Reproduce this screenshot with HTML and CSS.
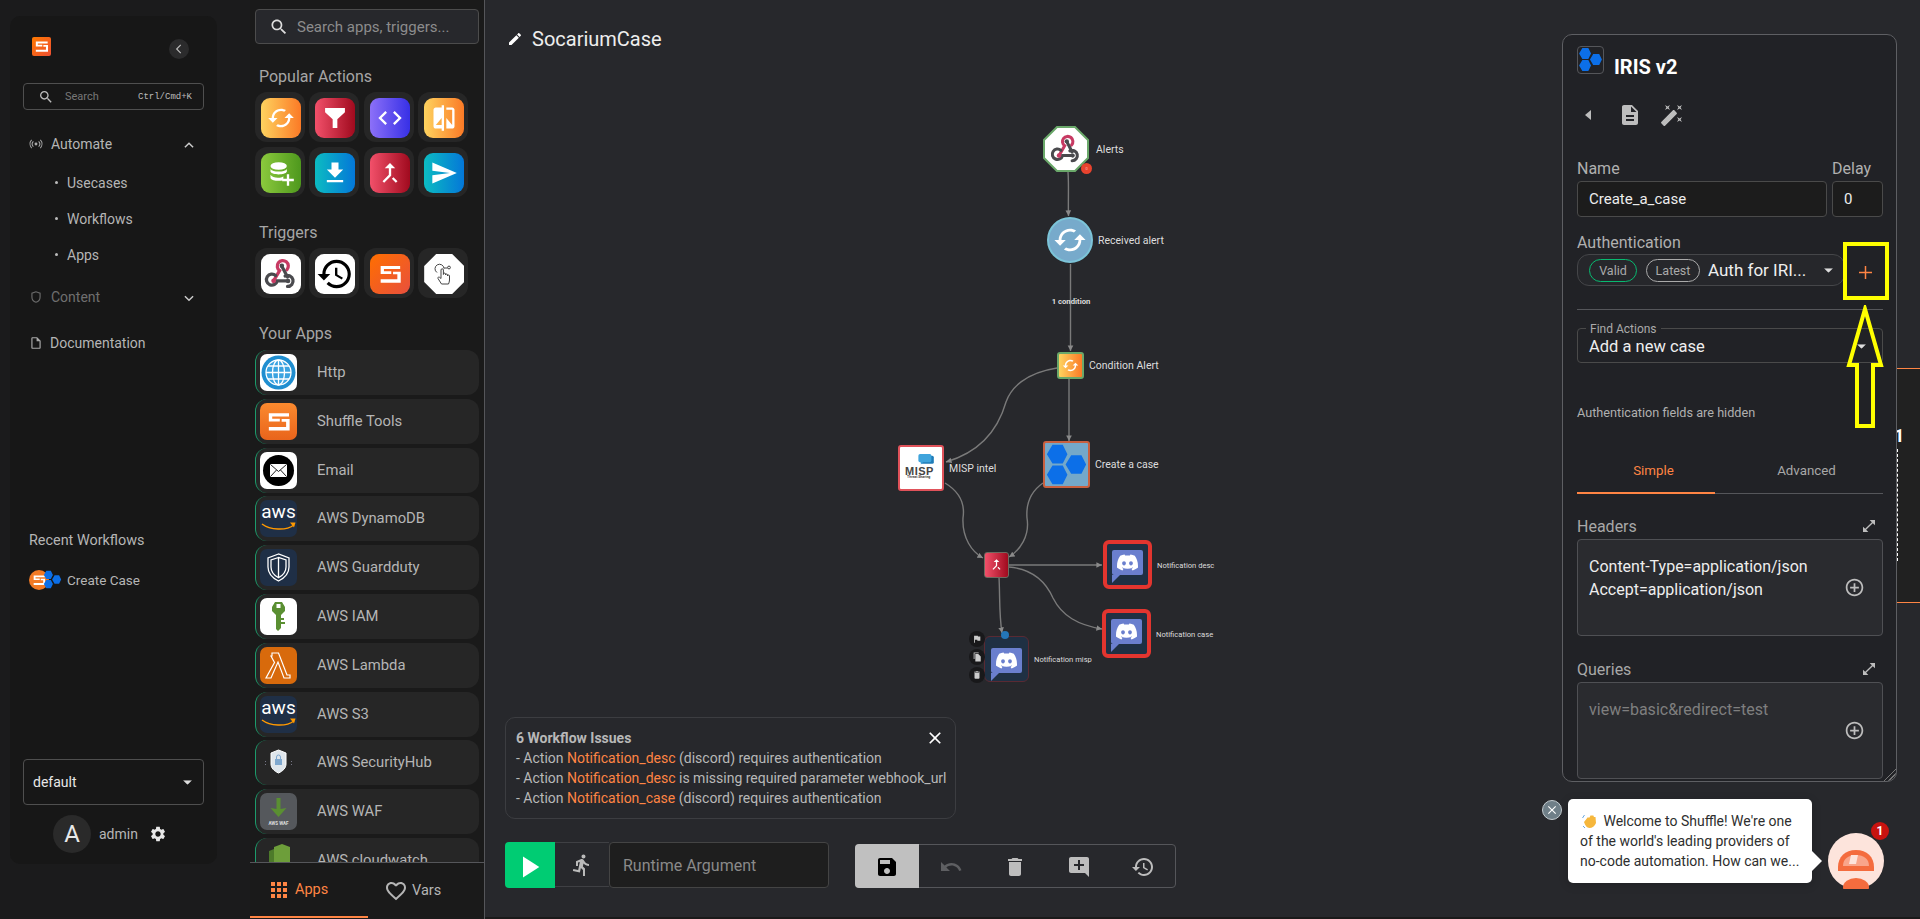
FILE: index.html
```html
<!DOCTYPE html>
<html lang="en">
<head>
    <meta charset="UTF-8" />
    <title>SocariumCase</title>
    <link rel="stylesheet" href="styles.css">
</head>
<body>
    <svg class="defs" width="0" height="0">
        <defs>
            <symbol id="i-search" viewBox="0 0 24 24"><path d="M15.5 14h-.79l-.28-.27C15.41 12.59 16 11.11 16 9.5 16 5.91 13.09 3 9.5 3S3 5.91 3 9.5 5.91 16 9.5 16c1.61 0 3.09-.59 4.23-1.57l.27.28v.79l5 4.99L20.49 19l-4.99-5zm-6 0C7.01 14 5 11.99 5 9.5S7.01 5 9.5 5 14 7.01 14 9.5 11.99 14 9.5 14z"/></symbol>
            <symbol id="i-cached" viewBox="0 0 24 24"><path d="M19 8l-4 4h3c0 3.31-2.69 6-6 6-1.01 0-1.97-.25-2.8-.7l-1.46 1.46C8.97 19.54 10.43 20 12 20c4.42 0 8-3.58 8-8h3l-4-4zM6 12c0-3.31 2.69-6 6-6 1.01 0 1.97.25 2.8.7l1.46-1.46C15.03 4.46 13.57 4 12 4c-4.42 0-8 3.58-8 8H1l4 4 4-4H6z"/></symbol>
            <symbol id="i-merge" viewBox="0 0 24 24"><path d="M17 20.41L18.41 19 15 15.59 13.59 17 17 20.41zM7.5 8H11v5.59L5.59 19 7 20.41l6-6V8h3.5L12 3.5 7.5 8z"/></symbol>
            <symbol id="i-shuffle" viewBox="0 0 24 24"><path d="M4 5.1H20.7V7.8H6.8V9.7H13.1V12H4zM21.2 19.5H4V16.5H18.3V12.3H14.6V10H21.2z"/></symbol>
            <symbol id="i-hex" viewBox="0 0 46 46"><path d="M2 12 8 2H19L24 12 19 22H8zM2 34 8 24H19L24 34 19 44H8zM22 23 28 13H39L44 23 39 33H28z"/></symbol>
            <symbol id="i-discord" viewBox="0 0 24 24"><path d="M20.317 4.3698a19.7913 19.7913 0 00-4.8851-1.5152.0741.0741 0 00-.0785.0371c-.211.3753-.4447.8648-.6083 1.2495-1.8447-.2762-3.68-.2762-5.4868 0-.1636-.3933-.4058-.8742-.6177-1.2495a.077.077 0 00-.0785-.037 19.7363 19.7363 0 00-4.8852 1.515.0699.0699 0 00-.0321.0277C.5334 9.0458-.319 13.5799.0992 18.0578a.0824.0824 0 00.0312.0561c2.0528 1.5076 4.0413 2.4228 5.9929 3.0294a.0777.0777 0 00.0842-.0276c.4616-.6304.8731-1.2952 1.226-1.9942a.076.076 0 00-.0416-.1057c-.6528-.2476-1.2743-.5495-1.8722-.8923a.077.077 0 01-.0076-.1277c.1258-.0943.2517-.1923.3718-.2914a.0743.0743 0 01.0776-.0105c3.9278 1.7933 8.18 1.7933 12.0614 0a.0739.0739 0 01.0785.0095c.1202.099.246.1981.3728.2924a.077.077 0 01-.0066.1276 12.2986 12.2986 0 01-1.873.8914.0766.0766 0 00-.0407.1067c.3604.698.7719 1.3628 1.225 1.9932a.076.076 0 00.0842.0286c1.961-.6067 3.9495-1.5219 6.0023-3.0294a.077.077 0 00.0313-.0552c.5004-5.177-.8382-9.6739-3.5485-13.6604a.061.061 0 00-.0312-.0286zM8.02 15.3312c-1.1825 0-2.1569-1.0857-2.1569-2.419 0-1.3332.9555-2.4189 2.157-2.4189 1.2108 0 2.1757 1.0952 2.1568 2.419 0 1.3332-.9555 2.4189-2.1569 2.4189zm7.9748 0c-1.1825 0-2.1569-1.0857-2.1569-2.419 0-1.3332.9554-2.4189 2.1569-2.4189 1.2108 0 2.1757 1.0952 2.1568 2.419 0 1.3332-.946 2.4189-2.1568 2.4189Z"/></symbol>
            <symbol id="i-webhook" viewBox="0 0 24 24">
                <g fill="none" stroke-width="2.3" stroke-linecap="round">
                    <path stroke="#c73a63" d="M6.8 16.8 11 9.6A3.9 3.9 0 1 1 16.2 9"/>
                    <path stroke="#4a4a4e" d="M12.6 6.5 16.6 14.2M14.9 13.4A3.9 3.9 0 1 1 16.6 20.8 M16.6 16.9H9.4A3.9 3.9 0 1 1 8.2 13"/>
                </g>
                <circle cx="12.6" cy="6.2" r="1.6" fill="#4a4a4e"/>
                <circle cx="6.8" cy="16.8" r="1.7" fill="#c73a63"/>
                <circle cx="17" cy="16.9" r="1.6" fill="#4a4a4e"/>
            </symbol>
            <symbol id="i-expand" viewBox="0 0 24 24"><path d="M21 11V3h-8l3.29 3.29-10 10L3 13v8h8l-3.29-3.29 10-10z"/></symbol>
            <symbol id="i-add-circle" viewBox="0 0 24 24"><path d="M13 7h-2v4H7v2h4v4h2v-4h4v-2h-4V7zm-1-5C6.48 2 2 6.48 2 12s4.48 10 10 10 10-4.48 10-10S17.52 2 12 2zm0 18c-4.41 0-8-3.59-8-8s3.59-8 8-8 8 3.59 8 8-3.59 8-8 8z"/></symbol>
            <symbol id="i-caret" viewBox="0 0 10 5"><path d="M0 0h10L5 5z"/></symbol>
            <symbol id="i-aws" viewBox="0 0 37 12"><path d="M2 3c8 6 24 7 32 1" fill="none" stroke="#f90" stroke-width="1.5"/><path d="M30 1.5l5.5 0-1.5 5z" fill="#f90"/></symbol>
        </defs>
    </svg>

    <div class="app">
        <nav class="nav">
            <div class="nav-inner">
                <div class="nav-head">
                    <span class="nav-logo"><svg class="fill-white" viewBox="0 0 24 24"><use href="#i-shuffle"/></svg></span>
                    <span class="collapse"><svg viewBox="0 0 24 24"><path d="M15 5l-7 7 7 7" fill="none" stroke="#bbb" stroke-width="2"/></svg></span>
                </div>
                <div class="nav-search">
                    <svg class="icon-16" viewBox="0 0 24 24"><use href="#i-search"/></svg>
                    <span class="nav-search-text">Search</span>
                    <span class="nav-search-key">Ctrl/Cmd+K</span>
                </div>
                <div class="nav-row nav-main">
                    <svg class="nav-icon" viewBox="0 0 24 24"><circle cx="12" cy="12" r="2.5" fill="#aaa"/><path d="M7.5 7.5a6.4 6.4 0 0 0 0 9M16.5 7.5a6.4 6.4 0 0 1 0 9M4.5 5a10.5 10.5 0 0 0 0 14M19.5 5a10.5 10.5 0 0 1 0 14" fill="none" stroke="#aaa" stroke-width="1.8"/></svg>
                    <span class="nav-label">Automate</span>
                    <svg class="chevron" viewBox="0 0 24 24"><path d="M5 16l7-7 7 7" fill="none" stroke="#ccc" stroke-width="2.5"/></svg>
                </div>
                <div class="nav-sub">
                    <div class="nav-sub-row">Usecases</div>
                    <div class="nav-sub-row">Workflows</div>
                    <div class="nav-sub-row">Apps</div>
                </div>
                <div class="nav-row nav-main nav-muted">
                    <svg class="nav-icon" viewBox="0 0 24 24"><path d="M12 3 5 5.5V12c0 4.5 3 7.8 7 9 4-1.2 7-4.5 7-9V5.5z" fill="none" stroke="#6a6a6a" stroke-width="2"/></svg>
                    <span class="nav-label">Content</span>
                    <svg class="chevron" viewBox="0 0 24 24"><path d="M5 9l7 7 7-7" fill="none" stroke="#ccc" stroke-width="2.5"/></svg>
                </div>
                <div class="nav-row nav-doc">
                    <svg class="nav-icon" viewBox="0 0 24 24"><path d="M14 2H6c-1.1 0-2 .9-2 2v16c0 1.1.9 2 2 2h12c1.1 0 2-.9 2-2V8l-6-6zm4 18H6V4h7v5h5v11z" fill="#aaa"/></svg>
                    <span class="nav-label">Documentation</span>
                </div>
                <div class="recent-title">Recent Workflows</div>
                <div class="recent-row">
                    <span class="recent-icon">
                        <span class="recent-logo"><svg class="fill-white" viewBox="0 0 24 24"><use href="#i-shuffle"/></svg></span>
                        <svg class="recent-hex fill-blue" viewBox="0 0 46 46"><use href="#i-hex"/></svg>
                    </span>
                    Create Case
                </div>
                <div class="org-select">
                    <span>default</span>
                    <svg class="caret" viewBox="0 0 10 5"><use href="#i-caret"/></svg>
                </div>
                <div class="user-row">
                    <span class="avatar">A</span>
                    <span class="user-name">admin</span>
                    <svg class="gear" viewBox="0 0 24 24"><path d="M19.14 12.94c.04-.3.06-.61.06-.94 0-.32-.02-.64-.07-.94l2.03-1.58c.18-.14.23-.41.12-.61l-1.92-3.32c-.12-.22-.37-.29-.59-.22l-2.39.96c-.5-.38-1.03-.7-1.62-.94l-.36-2.54c-.04-.24-.24-.41-.48-.41h-3.84c-.24 0-.43.17-.47.41l-.36 2.54c-.59.24-1.13.57-1.62.94l-2.39-.96c-.22-.08-.47 0-.59.22L2.74 8.87c-.12.21-.08.47.12.61l2.03 1.58c-.05.3-.09.63-.09.94s.02.64.07.94l-2.03 1.58c-.18.14-.23.41-.12.61l1.92 3.32c.12.22.37.29.59.22l2.39-.96c.5.38 1.03.7 1.62.94l.36 2.54c.05.24.24.41.48.41h3.84c.24 0 .44-.17.47-.41l.36-2.54c.59-.24 1.13-.56 1.62-.94l2.39.96c.22.08.47 0 .59-.22l1.92-3.32c.12-.22.07-.47-.12-.61l-2.01-1.58zM12 15.6c-1.98 0-3.6-1.62-3.6-3.6s1.62-3.6 3.6-3.6 3.6 1.62 3.6 3.6-1.62 3.6-3.6 3.6z"/></svg>
                </div>
            </div>
        </nav>

        <aside class="palette">
            <div class="palette-scroll">
                <div class="palette-search">
                    <svg class="icon-20" viewBox="0 0 24 24"><use href="#i-search"/></svg>
                    <span>Search apps, triggers...</span>
                </div>

                <div class="section-title first">Popular Actions</div>
                <div class="tile-grid">
                    <div class="tile"><span class="tile-icon grad-orange"><svg viewBox="0 0 24 24"><use href="#i-cached"/></svg></span></div>
                    <div class="tile"><span class="tile-icon grad-red"><svg viewBox="0 0 24 24"><path d="M3.5 3.5h17V7L14 13v7.5h-4V13L3.5 7z"/></svg></span></div>
                    <div class="tile"><span class="tile-icon grad-purple"><svg viewBox="0 0 24 24"><path d="M9.4 16.6L4.8 12l4.6-4.6L8 6l-6 6 6 6 1.4-1.4zm5.2 0l4.6-4.6-4.6-4.6L16 6l6 6-6 6-1.4-1.4z"/></svg></span></div>
                    <div class="tile"><span class="tile-icon grad-orange"><svg viewBox="0 0 24 24"><path d="M10 3H5c-1.1 0-2 .9-2 2v14c0 1.1.9 2 2 2h5v2h2V1h-2v2zm0 15H5l5-6v6zm9-15h-5v2h5v13l-5-6v9h5c1.1 0 2-.9 2-2V5c0-1.1-.9-2-2-2z"/></svg></span></div>
                    <div class="tile"><span class="tile-icon grad-green"><svg viewBox="0 0 24 24"><ellipse cx="10" cy="6" rx="7" ry="3.2"/><path d="M3 8.5c1.5 3 12.5 3 14 0V11c-1.500 3-12.500 3-14 0zM3 13.5c1.500 3 9 3.200 11 1.200v3.200c-3 1.400-9.500 1-11-1.400z"/><path d="M19 13v4h4v2h-4v4h-2v-4h-4v-2h4v-4z"/></svg></span></div>
                    <div class="tile"><span class="tile-icon grad-teal"><svg viewBox="0 0 24 24"><path d="M19 9h-4V3H9v6H5l7 7 7-7zM5 18v2h14v-2H5z"/></svg></span></div>
                    <div class="tile"><span class="tile-icon grad-red"><svg viewBox="0 0 24 24"><use href="#i-merge"/></svg></span></div>
                    <div class="tile"><span class="tile-icon grad-teal"><svg viewBox="0 0 24 24"><path d="M2.01 21L23 12 2.01 3 2 10l15 2-15 2z"/></svg></span></div>
                </div>

                <div class="section-title">Triggers</div>
                <div class="tile-grid">
                    <div class="tile"><span class="tile-icon tile-white"><svg viewBox="0 0 24 24"><use href="#i-webhook"/></svg></span></div>
                    <div class="tile"><span class="tile-icon tile-white tile-big"><svg viewBox="0 0 24 24"><path fill="#000" d="M13 3c-4.97 0-9 4.03-9 9H1l3.89 3.89.07.14L9 12H6c0-3.87 3.13-7 7-7s7 3.13 7 7-3.13 7-7 7c-1.93 0-3.68-.79-4.94-2.06l-1.42 1.42C8.27 19.99 10.51 21 13 21c4.97 0 9-4.03 9-9s-4.03-9-9-9zm-1 5v5l4.28 2.54.72-1.21-3.5-2.08V8H12z"/></svg></span></div>
                    <div class="tile"><span class="tile-icon grad-fire"><svg viewBox="0 0 24 24"><use href="#i-shuffle"/></svg></span></div>
                    <div class="tile"><span class="tile-icon tile-octagon"><svg viewBox="0 0 24 24" fill="none" stroke="#444" stroke-width="1"><path d="M5 10.500A4.500 4.500 0 1 1 12 6.500M12 6h3.500"/><circle cx="17" cy="5.500" r="1.400"/><path fill="#fff" d="M9.500 22 6 16.500c-.6-1 .7-2 1.600-1.200L9 16.500V8a1.200 1.200 0 0 1 2.400 0v4.500l.1-.5a1 1 0 0 1 2 .2v.8a1 1 0 0 1 2 0v1a1 1 0 0 1 2 0v4c0 1.500-.5 2.700-1 4z"/></svg></span></div>
                </div>

                <div class="section-title">Your Apps</div>
                <div class="app-list">
                    <div class="app-row">
                        <span class="app-icon app-white"><svg viewBox="0 0 37 37"><circle cx="18.5" cy="18.5" r="17" fill="#1f8ed0"/><circle cx="18.5" cy="18.5" r="12.5" fill="#3aa3e0"/><g fill="none" stroke="#fff" stroke-width="1.3"><circle cx="18.5" cy="18.5" r="12.5"/><ellipse cx="18.5" cy="18.5" rx="6" ry="12.5"/><path d="M18.5 6v25M6 18.5h25M8 12h21M8 25h21"/></g></svg></span>
                        <span class="app-name">Http</span>
                    </div>
                    <div class="app-row">
                        <span class="app-icon app-orange"><svg class="fill-white" viewBox="0 0 24 24"><use href="#i-shuffle"/></svg></span>
                        <span class="app-name">Shuffle Tools</span>
                    </div>
                    <div class="app-row">
                        <span class="app-icon app-white"><svg viewBox="0 0 37 37"><circle cx="18.5" cy="18.5" r="15.5" fill="#000"/><rect x="10" y="12" width="17" height="13" rx="1" fill="#fff"/><path d="M10.5 12.5l8 7 8-7M10.5 24.5l6-6.5M26.5 24.5l-6-6.5" fill="none" stroke="#222" stroke-width="1"/></svg></span>
                        <span class="app-name">Email</span>
                    </div>
                    <div class="app-row">
                        <span class="app-icon app-navy"><span class="aws-text">aws</span><svg class="aws-smile" viewBox="0 0 37 12"><use href="#i-aws"/></svg></span>
                        <span class="app-name">AWS DynamoDB</span>
                    </div>
                    <div class="app-row">
                        <span class="app-icon app-navy"><svg viewBox="0 0 37 37" fill="none" stroke="#fff" stroke-width="1.3"><path d="M18.5 5 8 9v9c0 6 4.5 11 10.5 14C24.5 29 29 24 29 18V9z"/><path d="M18.5 8.5 11 11v7c0 4.5 3.2 8.5 7.5 10.8C22.800 26.500 26 22.500 26 18v-7zM18.500 8.500v20.300"/></svg></span>
                        <span class="app-name">AWS Guardduty</span>
                    </div>
                    <div class="app-row">
                        <span class="app-icon app-white"><svg viewBox="0 0 37 37"><path d="M12 9l3-5h7l3 5v4l-4 4v13l-3 3-2-2v-14l-4-4z" fill="#5a8f32"/><rect x="16.5" y="6" width="4" height="4" fill="#fff"/><path d="M21 20h3v2h-3zM21 24h4v2h-4z" fill="#5a8f32"/></svg></span>
                        <span class="app-name">AWS IAM</span>
                    </div>
                    <div class="app-row">
                        <span class="app-icon app-lambda"><svg viewBox="0 0 37 37" fill="none" stroke="#fff" stroke-width="1.2"><path d="M12 6h6.500l8.500 22h3v3h-6L18 15l-7 16H6l8.500-15.500L11 9H12z"/></svg></span>
                        <span class="app-name">AWS Lambda</span>
                    </div>
                    <div class="app-row">
                        <span class="app-icon app-navy"><span class="aws-text">aws</span><svg class="aws-smile" viewBox="0 0 37 12"><use href="#i-aws"/></svg></span>
                        <span class="app-name">AWS S3</span>
                    </div>
                    <div class="app-row">
                        <span class="app-icon app-clear"><svg viewBox="0 0 37 37"><path d="M18.5 6 11 9v11c0 4 3 7 7.5 9 4.500-2 7.500-5 7.500-9V9z" fill="#dfe6ec" stroke="#fff"/><rect x="15" y="15" width="7" height="6" fill="#7fa8cf"/><path d="M16.5 15v-2a2 2 0 0 1 4 0v2" fill="none" stroke="#7fa8cf"/><path d="M5.5 17v1M5.5 20v1M31.5 17v1M31.5 20v1" stroke="#778"/></svg></span>
                        <span class="app-name">AWS SecurityHub</span>
                    </div>
                    <div class="app-row">
                        <span class="app-icon app-gray"><svg viewBox="0 0 37 37"><path d="M16.5 5h4v11l6-1-8 9-8-9 6 1z" fill="#5a8f32"/></svg><span class="waf-text">AWS WAF</span></span>
                        <span class="app-name">AWS WAF</span>
                    </div>
                    <div class="app-row">
                        <span class="app-icon app-clear"><svg viewBox="0 0 37 37"><path d="M9 9l5-2v28H9z" fill="#4d7a2a"/><path d="M14 5l8-3 8 3v30H14z" fill="#6d9e3a"/></svg></span>
                        <span class="app-name">AWS cloudwatch</span>
                    </div>
                </div>
            </div>
            <div class="palette-tabs">
                <div class="palette-tab active">
                    <svg class="icon-24" viewBox="0 0 24 24"><path d="M4 8h4V4H4v4zm6 12h4v-4h-4v4zm-6 0h4v-4H4v4zm0-6h4v-4H4v4zm6 0h4v-4h-4v4zm6-10v4h4V4h-4zm-6 4h4V4h-4v4zm6 6h4v-4h-4v4zm0 6h4v-4h-4v4z"/></svg>
                    <span>Apps</span>
                </div>
                <div class="palette-tab">
                    <svg class="icon-24" viewBox="0 0 24 24"><path d="M16.5 3c-1.74 0-3.41.81-4.5 2.09C10.91 3.81 9.24 3 7.5 3 4.42 3 2 5.42 2 8.5c0 3.78 3.4 6.86 8.55 11.54L12 21.35l1.45-1.32C18.6 15.36 22 12.28 22 8.5 22 5.42 19.58 3 16.5 3zm-4.4 15.55l-.1.1-.1-.1C7.14 14.24 4 11.39 4 8.5 4 6.5 5.5 5 7.5 5c1.54 0 3.04.99 3.57 2.36h1.87C13.46 5.99 14.96 5 16.5 5c2 0 3.5 1.5 3.5 3.5 0 2.89-3.14 5.74-7.9 10.05z"/></svg>
                    <span>Vars</span>
                </div>
            </div>
        </aside>

        <main class="canvas">
            <div class="wf-title">
                <svg class="icon-16 fill-white" viewBox="0 0 24 24"><path d="M3 17.25V21h3.75L17.81 9.94l-3.75-3.75L3 17.25zM20.71 7.04c.39-.39.39-1.02 0-1.41l-2.34-2.34c-.39-.39-1.02-.39-1.41 0l-1.83 1.83 3.75 3.75 1.83-1.83z"/></svg>
                <span>SocariumCase</span>
            </div>

            <!-- edges are in page coordinates -->
            <svg class="edges" viewBox="485 0 1435 919">
                <defs>
                    <marker id="arrow" markerWidth="5" markerHeight="5" refX="4" refY="2.5" orient="auto"><path d="M0 0.5 4 2.5 0 4.5z" fill="#8a8a8a"/></marker>
                </defs>
                <g fill="none" stroke="#7a7a7a" stroke-width="1.4" marker-end="url(#arrow)">
                    <path d="M1068 172C1069 185 1068 200 1068.5 216"/>
                    <path d="M1070.5 264V351"/>
                    <path d="M1057 368C1025 373 1011 388 1006 402 998 430 980 452 946 462"/>
                    <path d="M1069 379V441"/>
                    <path d="M945 483C960 492 965 505 963 518 962 538 972 552 983 558"/>
                    <path d="M1043 483C1030 492 1026 505 1027 518 1030 536 1020 550 1009 557"/>
                    <path d="M1009 565H1102"/>
                    <path d="M1009 567C1032 569 1045 580 1053 598 1062 616 1078 625 1102 629"/>
                    <path d="M999 577C1000 595 999 615 1002 633"/>
                </g>
            </svg>

            <div class="edge-label">1 condition</div>

            <div class="node n-alerts">
                <svg viewBox="0 0 46 46"><polygon points="14,1 32,1 45,14 45,32 32,45 14,45 1,32 1,14" fill="#fff" stroke="#6aa86a" stroke-width="2"/><use href="#i-webhook" x="7" y="7" width="32" height="32"/></svg>
                <span class="node-badge">0</span>
                <span class="node-label">Alerts</span>
            </div>
            <div class="node n-received">
                <svg class="fill-white" viewBox="0 0 24 24"><use href="#i-cached"/></svg>
                <span class="node-label">Received alert</span>
            </div>
            <div class="node n-condition">
                <svg class="fill-white" viewBox="0 0 24 24"><use href="#i-cached"/></svg>
                <span class="node-label">Condition Alert</span>
            </div>
            <div class="node n-misp">
                <svg class="misp-bubble" viewBox="0 0 20 16"><rect x="3" y="2" width="16" height="10" rx="2" fill="#1f7cb8"/><rect x="0" y="0" width="16" height="10" rx="2" fill="#3fa4dc"/><path d="M3 10v3l3-3z" fill="#3fa4dc"/></svg>
                <span class="misp-text">MISP</span>
                <span class="misp-sub">Threat Sharing</span>
                <span class="node-label">MISP intel</span>
            </div>
            <div class="node n-case">
                <svg class="fill-blue" viewBox="0 0 46 46"><use href="#i-hex"/></svg>
                <span class="node-label">Create a case</span>
            </div>
            <div class="node n-merge">
                <svg class="fill-white" viewBox="0 0 24 24"><use href="#i-merge"/></svg>
            </div>
            <div class="node n-discord n-desc">
                <span class="discord-box"><svg viewBox="0 0 24 24"><use href="#i-discord"/></svg></span>
                <span class="node-label small">Notification desc</span>
            </div>
            <div class="node n-discord n-notif-case">
                <span class="discord-box"><svg viewBox="0 0 24 24"><use href="#i-discord"/></svg></span>
                <span class="node-label small">Notification case</span>
            </div>
            <div class="node n-discord n-misp-notif">
                <span class="discord-box"><svg viewBox="0 0 24 24"><use href="#i-discord"/></svg></span>
                <span class="node-dot"></span>
                <span class="node-label small">Notification misp</span>
            </div>
            <div class="node-tools">
                <span class="node-tool"><svg viewBox="0 0 24 24"><path d="M14.4 6 14 4H5v17h2v-7h5.6l.4 2h7V6z"/></svg></span>
                <span class="node-tool"><svg viewBox="0 0 24 24"><path d="M16 1H4v16h2V3h10zm-1 4H8v18h13V11z"/></svg></span>
                <span class="node-tool"><svg viewBox="0 0 24 24"><path d="M6 19c0 1.1.9 2 2 2h8c1.1 0 2-.9 2-2V7H6v12zM19 4h-3.5l-1-1h-5l-1 1H5v2h14V4z"/></svg></span>
            </div>

            <div class="issues">
                <svg class="issues-close" viewBox="0 0 24 24"><path d="M19 6.41L17.59 5 12 10.59 6.41 5 5 6.41 10.59 12 5 17.59 6.41 19 12 13.41 17.59 19 19 17.59 13.41 12z"/></svg>
                <div class="issues-title">6 Workflow Issues</div>
                <div>- Action <span class="accent">Notification_desc</span> (discord) requires authentication</div>
                <div>- Action <span class="accent">Notification_desc</span> is missing required parameter webhook_url</div>
                <div>- Action <span class="accent">Notification_case</span> (discord) requires authentication</div>
            </div>

            <div class="run-bar">
                <span class="run-btn"><svg viewBox="0 0 24 24"><path d="M6 3v18l14-9z"/></svg></span>
                <span class="walk-btn"><svg viewBox="0 0 24 24"><path d="M13.49 5.48c1.1 0 2-.9 2-2s-.9-2-2-2-2 .9-2 2 .9 2 2 2zm-3.6 13.9l1-4.4 2.1 2v6h2v-7.5l-2.1-2 .6-3c1.3 1.5 3.3 2.5 5.5 2.5v-2c-1.9 0-3.5-1-4.3-2.4l-1-1.6c-.4-.6-1-1-1.7-1-.3 0-.5.1-.8.1l-5.2 2.2v4.7h2v-3.4l1.8-.7-1.6 8.1-4.9-1-.4 2 7 1.4z"/></svg></span>
                <span class="runtime-input">Runtime Argument</span>
            </div>

            <div class="tool-bar">
                <span class="tool tool-save"><svg viewBox="0 0 24 24"><path d="M17 3H5c-1.11 0-2 .9-2 2v14c0 1.1.89 2 2 2h14c1.1 0 2-.9 2-2V7l-4-4zm-5 16c-1.66 0-3-1.34-3-3s1.34-3 3-3 3 1.34 3 3-1.34 3-3 3zm3-10H5V5h10v4z"/></svg></span>
                <span class="tool tool-off"><svg viewBox="0 0 24 24"><path d="M12.5 8c-2.65 0-5.05.99-6.9 2.6L2 7v9h9l-3.62-3.62c1.39-1.16 3.16-1.88 5.12-1.88 3.54 0 6.55 2.31 7.6 5.5l2.37-.78C21.08 11.03 17.15 8 12.5 8z"/></svg></span>
                <span class="tool"><svg viewBox="0 0 24 24"><path d="M6 19c0 1.1.9 2 2 2h8c1.1 0 2-.9 2-2V7H6v12zM19 4h-3.5l-1-1h-5l-1 1H5v2h14V4z"/></svg></span>
                <span class="tool"><svg viewBox="0 0 24 24"><path d="M22 4c0-1.1-.9-2-2-2H4c-1.1 0-2 .9-2 2v12c0 1.1.9 2 2 2h14l4 4V4zm-5 7h-4v4h-2v-4H7V9h4V5h2v4h4v2z"/></svg></span>
                <span class="tool"><svg viewBox="0 0 24 24"><path d="M13 3c-4.97 0-9 4.03-9 9H1l3.89 3.89.07.14L9 12H6c0-3.87 3.13-7 7-7s7 3.13 7 7-3.13 7-7 7c-1.93 0-3.68-.79-4.94-2.06l-1.42 1.42C8.27 19.99 10.51 21 13 21c4.97 0 9-4.03 9-9s-4.03-9-9-9zm-1 5v5l4.28 2.54.72-1.21-3.5-2.08V8H12z"/></svg></span>
            </div>

            <div class="peek">
                <span class="peek-one">1</span>
                <span class="peek-dash"></span>
            </div>

            <section class="side">
                <div class="side-head">
                    <span class="side-logo"><svg class="fill-blue" viewBox="0 0 46 46"><use href="#i-hex"/></svg></span>
                    <span class="side-title">IRIS v2</span>
                </div>
                <div class="side-icons">
                    <svg viewBox="0 0 24 24"><path d="M15 7v10l-6-5z"/></svg>
                    <svg viewBox="0 0 24 24"><path d="M14 2H6c-1.1 0-1.99.9-1.99 2L4 20c0 1.1.89 2 1.99 2H18c1.1 0 2-.9 2-2V8l-6-6zm2 16H8v-2h8v2zm0-4H8v-2h8v2zm-3-5V3.5L18.5 9H13z"/></svg>
                    <svg viewBox="0 0 24 24"><path d="M7.5 5.6L10 7 8.6 4.5 10 2 7.5 3.4 5 2l1.4 2.5L5 7zm12 9.8L17 14l1.4 2.5L17 19l2.5-1.4L22 19l-1.4-2.5L22 14zM22 2l-2.5 1.4L17 2l1.4 2.5L17 7l2.5-1.4L22 7l-1.4-2.5zm-7.63 5.29c-.39-.39-1.02-.39-1.41 0L1.29 18.96c-.39.39-.39 1.02 0 1.41l2.34 2.34c.39.39 1.02.39 1.41 0L16.7 11.05c.39-.39.39-1.02 0-1.41l-2.33-2.35z"/></svg>
                </div>
                <div class="field-row">
                    <div class="field field-name">
                        <div class="field-label">Name</div>
                        <div class="input">Create_a_case</div>
                    </div>
                    <div class="field field-delay">
                        <div class="field-label">Delay</div>
                        <div class="input">0</div>
                    </div>
                </div>
                <div class="field-label auth-label">Authentication</div>
                <div class="auth-select">
                    <span class="pill pill-valid">Valid</span>
                    <span class="pill pill-latest">Latest</span>
                    <span class="auth-value">Auth for IRI...</span>
                    <svg class="caret" viewBox="0 0 10 5"><use href="#i-caret"/></svg>
                </div>
                <svg class="auth-plus" viewBox="0 0 14 14"><path d="M7 0v14M0 7h14" stroke="#ff8544" stroke-width="1.6"/></svg>
                <div class="divider"></div>
                <div class="find-actions">
                    <span class="find-legend">Find Actions</span>
                    <span class="find-value">Add a new case</span>
                    <svg class="caret" viewBox="0 0 10 5"><use href="#i-caret"/></svg>
                </div>
                <div class="auth-hidden">Authentication fields are hidden</div>
                <div class="tabs">
                    <div class="tab tab-active">Simple</div>
                    <div class="tab">Advanced</div>
                </div>
                <div class="param-head">
                    <span>Headers</span>
                    <svg viewBox="0 0 24 24"><use href="#i-expand"/></svg>
                </div>
                <div class="param-box">
                    Content-Type=application/json<br />Accept=application/json
                    <svg class="param-add" viewBox="0 0 24 24"><use href="#i-add-circle"/></svg>
                </div>
                <div class="param-head">
                    <span>Queries</span>
                    <svg viewBox="0 0 24 24"><use href="#i-expand"/></svg>
                </div>
                <div class="param-box placeholder">
                    view=basic&amp;redirect=test
                    <svg class="param-add" viewBox="0 0 24 24"><use href="#i-add-circle"/></svg>
                </div>
                <span class="resize-grip"></span>
            </section>

            <!-- yellow markup drawn on the screenshot -->
            <div class="mark-box"></div>
            <svg class="mark-arrow" viewBox="0 0 38 124"><path d="M19 4 35 60H27V121H11V60H3z" fill="none" stroke="#ffff00" stroke-width="4"/></svg>

            <div class="chat-close"><svg viewBox="0 0 24 24"><path d="M19 6.41L17.59 5 12 10.59 6.41 5 5 6.41 10.59 12 5 17.59 6.41 19 12 13.41 17.59 19 19 17.59 13.41 12z"/></svg></div>
            <div class="chat-bubble">
                <svg class="wave" viewBox="0 0 16 16"><path d="M2 9 6 4l1 1 2-3 1 1 1-1 1 2 1.5 0 .5 6c-1 3-4 5-6.5 5S3 12 2 9z" fill="#f6b73c"/><path d="M0.5 5l2-3M1 13l2 2" stroke="#6aa7e0" fill="none"/></svg>
                Welcome to Shuffle! We're one of the world's leading providers of no-code automation. How can we...
            </div>
            <div class="chat-avatar">
                <svg viewBox="0 0 56 56"><circle cx="28" cy="28" r="28" fill="#fde4dc"/><path d="M10 34c0-10 7-17 18-17s18 7 18 17v4H10z" fill="#f46c3e"/><path d="M15 33c0-7 5-11 13-11s13 4 13 11z" fill="#f9a58a"/><path d="M21 31l2-9h7l-2 9z" fill="#fde4dc"/><ellipse cx="28" cy="54" rx="13" ry="9" fill="#f46c3e"/></svg>
            </div>
            <div class="chat-badge">1</div>
        </main>
    </div>
</body>
</html>
```

FILE: styles.css
```css
* {
    box-sizing: border-box;
}
html, body {
    margin: 0;
    height: 100%;
    overflow: hidden;
}
body {
    background-color: #1a1a1a;
    font-family: Roboto, "Liberation Sans", sans-serif;
    color: #b5b5b5;
    fill: currentColor;
}
svg {
    display: block;
}
.defs {
    position: absolute;
}
.fill-white {
    fill: #fff;
}
.fill-blue {
    fill: #0c6fe8;
}
.icon-16 {
    width: 16px;
    height: 16px;
}
.icon-20 {
    width: 20px;
    height: 20px;
}
.icon-24 {
    width: 24px;
    height: 24px;
}
.accent {
    color: #ff8544;
}
.app {
    display: flex;
    height: 919px;
}

/* left nav */
.nav {
    width: 250px;
    padding: 16px 33px 55px 10px;
    flex: none;
    background-color: #1b1b1c;
}
.nav-inner {
    display: flex;
    flex-direction: column;
    height: 100%;
    padding: 21px 13px 11px;
    background-color: #171717;
    border-radius: 10px;
}
.nav-head {
    display: flex;
    justify-content: space-between;
    height: 22px;
    padding: 0 15px 0 9px;
}
.nav-logo {
    display: block;
    width: 19px;
    height: 19px;
    padding: 1px;
    background: linear-gradient(135deg, #ff7a00, #ee4f33);
    border-radius: 2px;
}
.collapse {
    display: block;
    width: 20px;
    height: 20px;
    margin-top: 2px;
    padding: 3px;
    background-color: #2b2b2c;
    border-radius: 50%;
}
.nav-search {
    display: flex;
    align-items: center;
    height: 27px;
    margin-top: 24px;
    padding: 0 11px 0 14px;
    border: 1px solid #4f4f4f;
    border-radius: 4px;
    color: #bdbdbd;
}
.nav-search-text {
    margin-left: 11px;
    font-size: 11px;
    color: #777;
}
.nav-search-key {
    margin-left: auto;
    font-family: "Liberation Mono", monospace;
    font-size: 9px;
    color: #bbb;
}
.nav-row {
    display: flex;
    align-items: center;
    height: 36px;
    font-size: 14px;
    padding-left: 6px;
}
.nav-main {
    margin-top: 16px;
}
.nav-icon {
    width: 14px;
    height: 14px;
    flex: none;
}
.nav-label {
    margin-left: 8px;
}
.chevron {
    width: 14px;
    height: 14px;
    margin-left: auto;
    margin-right: 8px;
    margin-top: 2px;
}
.nav-sub {
    margin-top: 3px;
    font-size: 14px;
}
.nav-sub-row {
    position: relative;
    height: 36px;
    line-height: 36px;
    padding-left: 44px;
}
.nav-sub-row::before {
    content: "";
    position: absolute;
    left: 32px;
    top: 16px;
    width: 3px;
    height: 3px;
    background-color: #bbb;
    border-radius: 50%;
}
.nav-muted {
    margin-top: 6px;
    color: #6f6f6f;
}
.nav-doc {
    margin-top: 10px;
}
.nav-doc .nav-label {
    margin-left: 7px;
}
.recent-title {
    height: 22px;
    margin-top: 169px;
    padding-left: 6px;
    line-height: 22px;
    font-size: 14.4px;
}
.recent-row {
    display: flex;
    align-items: center;
    height: 24px;
    margin-top: 16px;
    padding-left: 6px;
    font-size: 13.5px;
}
.recent-icon {
    position: relative;
    width: 38px;
    height: 20px;
    flex: none;
}
.recent-logo {
    display: block;
    width: 20px;
    height: 20px;
    padding: 2px;
    background-color: #f27a25;
    border-radius: 50%;
}
.recent-hex {
    position: absolute;
    left: 14px;
    top: 0;
    width: 19px;
    height: 19px;
}
.org-select {
    display: flex;
    align-items: center;
    justify-content: space-between;
    height: 46px;
    margin-top: auto;
    padding: 0 11px 0 9px;
    border: 1px solid #4f4f4f;
    border-radius: 4px;
    font-size: 14px;
    color: #e8e8e8;
}
.caret {
    width: 9px;
    height: 5px;
    flex: none;
    fill: #ddd;
}
.user-row {
    display: flex;
    align-items: center;
    height: 38px;
    margin-top: 10px;
    padding-left: 30px;
    font-size: 14px;
}
.avatar {
    display: flex;
    align-items: center;
    justify-content: center;
    width: 38px;
    height: 38px;
    background-color: #2a2a2a;
    border-radius: 50%;
    font-size: 24px;
    color: #e8e8e8;
}
.user-name {
    margin-left: 8px;
}
.gear {
    width: 18px;
    height: 18px;
    margin-left: 11px;
    fill: #e8e8e8;
}

/* apps palette */
.palette {
    display: flex;
    flex-direction: column;
    width: 235px;
    flex: none;
    border-right: 1px solid #55565a;
    background-color: #1a1a1a;
}
.palette-scroll {
    flex: 1;
    overflow: hidden;
    padding: 9px 5px 0;
}
.palette-search {
    display: flex;
    align-items: center;
    gap: 8px;
    height: 35px;
    padding-left: 13px;
    background-color: #27282c;
    border: 1px solid #4c4c4c;
    border-radius: 4px;
    font-size: 15px;
    color: #8c8c8c;
}
.palette-search svg {
    color: #ddd;
    flex: none;
}
.section-title {
    height: 20px;
    margin-top: 25px;
    padding-left: 4px;
    line-height: 22px;
    font-size: 16px;
    color: #a6a6a6;
}
.section-title.first {
    margin-top: 22px;
}
.tile-grid {
    display: grid;
    grid-template-columns: repeat(4, 50px);
    column-gap: 4.4px;
    row-gap: 5px;
    margin-top: 6px;
}
.tile {
    width: 50px;
    height: 50px;
    padding: 6px;
    background-color: #262626;
    border-radius: 12px;
}
.tile-icon {
    display: block;
    width: 40px;
    height: 40px;
    padding: 6px;
    border-radius: 9px;
    fill: #fff;
}
.tile-white {
    background-color: #fff;
    padding: 3px;
}
.tile-big {
    padding: 1px;
}
.tile-octagon {
    background-color: #fff;
    padding: 8px;
    clip-path: polygon(30% 0, 70% 0, 100% 30%, 100% 70%, 70% 100%, 30% 100%, 0 70%, 0 30%);
    border-radius: 0;
}
.grad-orange {
    background: linear-gradient(90deg, #fed35f, #fb7a26);
}
.grad-red {
    background: linear-gradient(90deg, #f2506a, #a00a1e);
}
.grad-purple {
    background: linear-gradient(90deg, #8c70f8, #3730e6);
}
.grad-green {
    background: linear-gradient(90deg, #8bc93d, #4e981d);
}
.grad-teal {
    background: linear-gradient(90deg, #0cbcc2, #0477d8);
}
.grad-fire {
    background: linear-gradient(135deg, #ff6f00, #e84f3d);
}
.app-list {
    display: flex;
    flex-direction: column;
    gap: 3.8px;
    margin-top: 7px;
}
.app-row {
    display: flex;
    align-items: center;
    flex: none;
    gap: 20px;
    height: 45px;
    padding-left: 4px;
    background-color: #262626;
    border-left: 1px solid #1c9c6b;
    border-radius: 12px;
    font-size: 14.8px;
    color: #b5b5b5;
}
.app-name {
    margin-top: -1px;
}
.app-icon {
    position: relative;
    display: block;
    width: 37px;
    height: 37px;
    flex: none;
    overflow: hidden;
    border-radius: 7px;
}
.app-white {
    background-color: #fff;
}
.app-orange {
    padding: 4px;
    background: linear-gradient(180deg, #fb8a2e, #e9641c);
}
.app-navy {
    background-color: #1f2f46;
}
.app-lambda {
    background-color: #d86a0c;
}
.app-gray {
    background-color: #55585c;
}
.aws-text {
    display: block;
    margin-top: 2px;
    text-align: center;
    font-size: 19px;
    line-height: 20px;
    color: #fff;
}
.aws-smile {
    width: 37px;
    height: 12px;
    margin-top: -1px;
}
.waf-text {
    position: absolute;
    left: 0;
    right: 0;
    bottom: 4px;
    text-align: center;
    font-size: 4.5px;
    font-weight: 700;
    color: #ddd;
}
.palette-tabs {
    display: flex;
    height: 57px;
    flex: none;
    border-top: 1px solid #55565a;
    font-size: 14.5px;
}
.palette-tab {
    display: flex;
    align-items: center;
    gap: 4px;
    width: 116px;
    height: 55px;
    padding-left: 16px;
}
.palette-tab.active {
    width: 118px;
    padding-left: 17px;
    border-bottom: 2px solid #ff8544;
    color: #ff8544;
}

/* workflow canvas */
.canvas {
    position: relative;
    flex: 1;
    background-color: #27282c;
    border-bottom: 2px solid #1a1a1a;
    overflow: hidden;
}
.wf-title {
    position: absolute;
    left: 22px;
    top: 27px;
    display: flex;
    align-items: center;
    gap: 9px;
    font-size: 20px;
    color: #eee;
}
.edges {
    position: absolute;
    left: 0;
    top: 0;
    width: 1435px;
    height: 919px;
    fill: none;
}
.edge-label {
    position: absolute;
    left: 586px;
    top: 297px;
    width: 0;
    display: flex;
    justify-content: center;
    white-space: nowrap;
    font-size: 7.7px;
    font-weight: 700;
    line-height: 10px;
    color: #ddd;
}
.node {
    position: absolute;
}
.node-label {
    position: absolute;
    left: 100%;
    top: 50%;
    margin-left: 7px;
    transform: translateY(-50%);
    white-space: nowrap;
    font-size: 10.5px;
    color: #ddd;
}
.node-label.small {
    font-size: 7.6px;
    margin-left: 9px;
}
.n-alerts {
    left: 558px;
    top: 126px;
    width: 46px;
    height: 46px;
}
.node-badge {
    position: absolute;
    left: 38px;
    top: 37px;
    width: 11px;
    height: 11px;
    background-color: #e8432e;
    border-radius: 50%;
    text-align: center;
    line-height: 11px;
    font-size: 4px;
    color: #fbb;
}
.n-received {
    left: 562px;
    top: 217px;
    width: 46px;
    height: 46px;
    padding: 4px;
    background-color: #77aacb;
    border: 2px solid #7cc4d8;
    border-radius: 50%;
}
.n-condition {
    left: 572px;
    top: 352px;
    width: 27px;
    height: 27px;
    padding: 3px;
    background: linear-gradient(90deg, #fed35f, #fb7a26);
    border: 2px solid #6aa86a;
    border-radius: 3px;
}
.n-condition .node-label {
    margin-left: 7px;
    margin-top: -1px;
}
.n-misp {
    left: 413px;
    top: 445px;
    width: 46px;
    height: 46px;
    background-color: #fff;
    border: 2px solid #e0525a;
    border-radius: 3px;
}
.misp-bubble {
    position: absolute;
    left: 18px;
    top: 7px;
    width: 17px;
    height: 13px;
}
.misp-text {
    position: absolute;
    left: 5px;
    top: 19px;
    font-family: "Liberation Sans", sans-serif;
    font-size: 11px;
    line-height: 10px;
    font-weight: 700;
    letter-spacing: 0.5px;
    color: #444;
}
.misp-sub {
    position: absolute;
    left: 7px;
    top: 28px;
    white-space: nowrap;
    font-size: 3.5px;
    font-weight: 700;
    color: #444;
}
.n-case {
    left: 558px;
    top: 441px;
    width: 47px;
    height: 47px;
    background-color: #74a8c9;
    border: 2px solid #c8603f;
    border-radius: 3px;
}
.n-case .node-label {
    margin-top: -1px;
}
.n-merge {
    left: 499px;
    top: 552px;
    width: 25px;
    height: 26px;
    padding: 4px;
    background: linear-gradient(90deg, #f2506a, #a00a1e);
    border: 1px solid #6f6a60;
    border-radius: 3px;
}
.n-discord {
    width: 49px;
    height: 49px;
    background-color: #1f3043;
    border: 4px solid #e2352f;
    border-radius: 6px;
}
.discord-box {
    position: relative;
    display: block;
    width: 31px;
    height: 25px;
    margin: 6px 0 0 5px;
    padding: 2px 5px;
    background-color: #6a7fce;
    border-radius: 2px;
    fill: #fff;
}
.discord-box::after {
    content: "";
    position: absolute;
    left: 0;
    top: 100%;
    border-top: 8px solid #6a7fce;
    border-right: 8px solid transparent;
}
.n-desc {
    left: 618px;
    top: 540px;
}
.n-notif-case {
    left: 617px;
    top: 609px;
}
.n-misp-notif {
    left: 499px;
    top: 636px;
    width: 45px;
    height: 46px;
    border: 1px solid #5a2a33;
}
.n-misp-notif .discord-box {
    margin: 11px 0 0 6px;
}
.n-misp-notif .node-label {
    margin-left: 6px;
}
.node-dot {
    position: absolute;
    left: 16px;
    top: -6px;
    width: 8px;
    height: 8px;
    background-color: #2476b8;
    border-radius: 50%;
}
.node-tools {
    position: absolute;
    left: 484px;
    top: 631px;
    display: flex;
    flex-direction: column;
    gap: 2px;
}
.node-tool {
    display: block;
    width: 16px;
    height: 16px;
    padding: 3px;
    background-color: #18181a;
    border-radius: 50%;
    fill: #ccc;
}
.issues {
    position: absolute;
    left: 20px;
    top: 717px;
    width: 451px;
    height: 102px;
    padding: 10px 10px 0;
    background-color: #27282c;
    border: 1px solid #3c3d41;
    border-radius: 10px;
    font-size: 14px;
    line-height: 20px;
    color: #b8b8b8;
    white-space: nowrap;
}
.issues-title {
    font-weight: 700;
}
.issues-close {
    position: absolute;
    right: 10px;
    top: 10px;
    width: 20px;
    height: 20px;
    fill: #fff;
}
.run-bar {
    position: absolute;
    left: 20px;
    top: 842px;
    display: flex;
}
.run-btn {
    display: block;
    width: 50px;
    height: 46px;
    padding: 11px;
    background-color: #00cc73;
    border-radius: 4px 0 0 4px;
    fill: #fff;
}
.walk-btn {
    display: block;
    width: 54px;
    height: 45px;
    padding: 10px 15px;
    border: 1px solid #3f4044;
    border-left: 0;
    border-right: 0;
    fill: #bbb;
}
.runtime-input {
    display: block;
    width: 220px;
    height: 46px;
    padding-left: 13px;
    background-color: #1e1e1e;
    border: 1px solid #444;
    border-radius: 4px;
    line-height: 45px;
    font-size: 16px;
    color: #8a8a8a;
}
.tool-bar {
    position: absolute;
    left: 370px;
    top: 844px;
    display: flex;
    width: 321px;
    height: 44px;
    border: 1px solid #55565a;
    border-radius: 4px;
}
.tool {
    display: block;
    width: 64px;
    padding: 10px 20px;
    fill: #bdbdbd;
}
.tool-save {
    margin: -1px 0 -1px -1px;
    padding: 11px 20px;
    background-color: #c0c0c0;
    border-radius: 4px 0 0 4px;
    fill: #000;
}
.tool-off {
    fill: #5e5f62;
}
.peek {
    position: absolute;
    left: 1400px;
    top: 368px;
    width: 35px;
    height: 235px;
    background-color: #212121;
    border-top: 1px solid #ff8544;
    border-bottom: 1px solid #ff8544;
}
.peek-one {
    position: absolute;
    left: 9px;
    top: 56px;
    font-size: 18px;
    font-weight: 700;
    color: #fff;
}
.peek-dash {
    position: absolute;
    left: 12px;
    top: 80px;
    height: 112px;
    border-left: 1px dashed #fff;
}

/* action panel */
.side {
    position: absolute;
    left: 1077px;
    top: 34px;
    width: 335px;
    height: 748px;
    padding: 11px 13px 0 14px;
    background-color: #212226;
    border: 1px solid #5e5f63;
    border-radius: 10px;
    overflow: hidden;
}
.side-head {
    display: flex;
    align-items: flex-end;
    height: 28px;
}
.side-logo {
    display: block;
    width: 27px;
    height: 28px;
    border: 1px solid #55565a;
    border-radius: 4px;
}
.side-title {
    margin-left: 10px;
    margin-bottom: -3px;
    font-size: 20px;
    line-height: 20px;
    font-weight: 700;
    color: #fff;
}
.side-icons {
    display: flex;
    margin-top: 29px;
    margin-left: -1px;
    fill: #bdbdbd;
}
.side-icons svg {
    width: 24px;
    height: 24px;
    margin-right: 18px;
}
.field-row {
    display: flex;
    gap: 5px;
    margin-top: 32px;
}
.field-name {
    width: 250px;
}
.field-delay {
    width: 51px;
}
.field-label {
    height: 20px;
    margin-bottom: 2px;
    line-height: 20px;
    font-size: 16px;
    color: #b0b0b0;
}
.input {
    height: 36px;
    padding-left: 11px;
    background-color: #1c1c1c;
    border: 1px solid #4a4a4a;
    border-radius: 4px;
    line-height: 34px;
    font-size: 15px;
    color: #ededed;
}
.auth-label {
    margin-top: 16px;
    margin-bottom: 1px;
}
.auth-select {
    display: flex;
    align-items: center;
    width: 268px;
    height: 32px;
    padding-left: 11px;
    background-color: #26272b;
    border: 1px solid #454649;
    border-radius: 12px;
}
.pill {
    display: block;
    height: 23px;
    border: 1px solid #aaa;
    border-radius: 12px;
    line-height: 21px;
    text-align: center;
    font-size: 12.5px;
    color: #aaa;
}
.pill-valid {
    width: 48px;
    border-color: #08b970;
}
.pill-latest {
    width: 54px;
    margin-left: 9px;
}
.auth-value {
    margin-left: 8px;
    font-size: 17px;
    color: #eee;
}
.auth-select .caret {
    margin-left: auto;
    margin-right: 11px;
}
.auth-plus {
    position: absolute;
    left: 296px;
    top: 231px;
    width: 13px;
    height: 13px;
}
.divider {
    height: 1px;
    margin-top: 23px;
    background-color: #55565a;
}
.find-actions {
    position: relative;
    display: flex;
    align-items: center;
    justify-content: space-between;
    height: 35px;
    margin-top: 18px;
    padding: 1px 16px 0 11px;
    background-color: #212226;
    border: 1px solid #4a4a4a;
    border-radius: 4px;
}
.find-legend {
    position: absolute;
    left: 8px;
    top: -6px;
    padding: 0 4px;
    background-color: #212226;
    font-size: 12px;
    line-height: 13px;
    color: #aaa;
}
.find-value {
    font-size: 16.5px;
    color: #eee;
}
.auth-hidden {
    height: 20px;
    margin-top: 40px;
    line-height: 20px;
    font-size: 12.7px;
    color: #b0b0b0;
}
.tabs {
    display: flex;
    height: 42px;
    margin-top: 29px;
    border-bottom: 1px solid #55565a;
}
.tab {
    position: relative;
    width: 153px;
    text-align: center;
    line-height: 38px;
    font-size: 13.3px;
    color: #a8a8a8;
}
.tab-active {
    color: #ff8544;
}
.tab-active::after {
    content: "";
    position: absolute;
    left: 0;
    bottom: -1px;
    width: 138px;
    height: 2px;
    background-color: #ff8544;
}
.param-head {
    display: flex;
    align-items: center;
    justify-content: space-between;
    height: 20px;
    margin-top: 23px;
    padding-right: 6px;
    font-size: 16px;
    color: #a8a8a8;
}
.param-head svg {
    width: 16px;
    height: 16px;
    fill: #bdbdbd;
}
.tabs + .param-head {
    margin-top: 22px;
}
.param-box {
    position: relative;
    height: 97px;
    margin-top: 3px;
    padding: 15px 11px 0;
    background-color: #2a2b2f;
    border: 1px solid #4f5054;
    border-radius: 4px;
    font-size: 16px;
    line-height: 23px;
    color: #eee;
}
.param-box.placeholder {
    color: #7f7f7f;
}
.param-add {
    position: absolute;
    right: 17px;
    top: 37px;
    width: 21px;
    height: 21px;
    fill: #bdbdbd;
}
.resize-grip {
    position: absolute;
    right: 0;
    bottom: 0;
    width: 14px;
    height: 14px;
    background: repeating-linear-gradient(135deg, transparent 0 2px, #777 2px 3px);
    clip-path: polygon(100% 0, 100% 100%, 0 100%);
}
.mark-box {
    position: absolute;
    left: 1358px;
    top: 242px;
    width: 46px;
    height: 58px;
    border: 4px solid #ffff00;
}
.mark-arrow {
    position: absolute;
    left: 1361px;
    top: 305px;
    width: 38px;
    height: 124px;
}

/* chat widget */
.chat-close {
    position: absolute;
    left: 1057px;
    top: 800px;
    width: 20px;
    height: 20px;
    padding: 2px;
    background-color: #6f7f88;
    border: 1px solid #c4ccd0;
    border-radius: 50%;
    fill: #fff;
}
.chat-bubble {
    position: absolute;
    left: 1083px;
    top: 799px;
    width: 244px;
    height: 84px;
    padding: 12px 8px 0 12px;
    background-color: #fff;
    border-radius: 5px;
    box-shadow: 0 2px 10px rgba(0, 0, 0, 0.2);
    font-size: 14px;
    line-height: 20px;
    color: #2e2e2e;
}
.chat-bubble::after {
    content: "";
    position: absolute;
    left: 100%;
    top: 52px;
    border-left: 10px solid #fff;
    border-top: 10px solid transparent;
    border-bottom: 10px solid transparent;
}
.wave {
    display: inline-block;
    width: 16px;
    height: 16px;
    margin: 0 2px 0 2px;
    vertical-align: -3px;
}
.chat-avatar {
    position: absolute;
    left: 1343px;
    top: 833px;
    width: 56px;
    height: 56px;
}
.chat-badge {
    position: absolute;
    left: 1386px;
    top: 822px;
    width: 18px;
    height: 18px;
    background-color: #c8130f;
    border-radius: 50%;
    text-align: center;
    line-height: 18px;
    font-size: 12px;
    font-weight: 700;
    color: #fff;
}
```
